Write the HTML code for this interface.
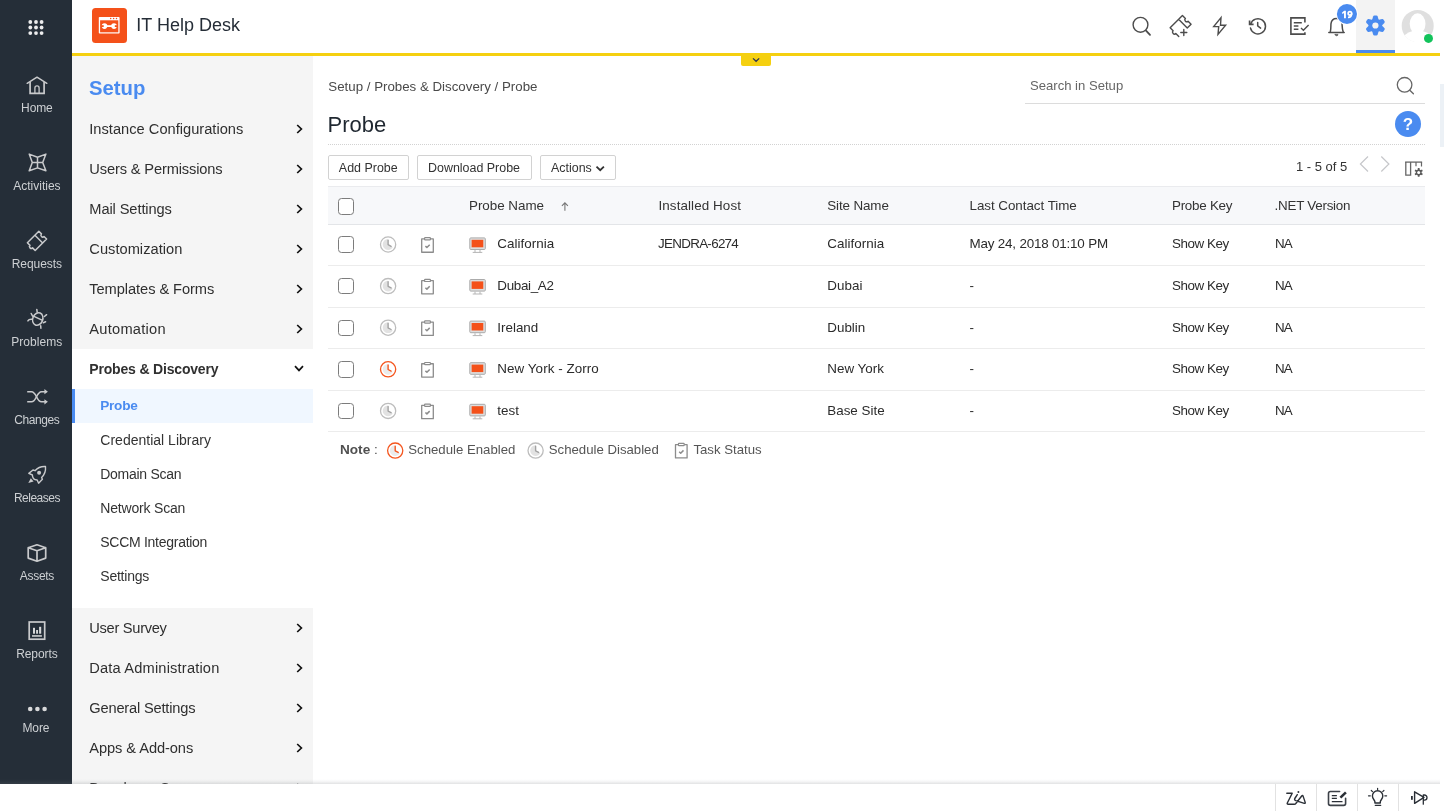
<!DOCTYPE html>
<html>
<head>
<meta charset="utf-8">
<title>Probe</title>
<style>
*{box-sizing:border-box;margin:0;padding:0}
html,body{width:1444px;height:811px;overflow:hidden;background:#fff}
body{font-family:"Liberation Sans",sans-serif;color:#333;position:relative;font-size:13.4px}
#wrap{position:absolute;left:0;top:0;width:1444px;height:811px;will-change:transform}
.abs{position:absolute}
.t{position:absolute;white-space:nowrap;line-height:1}
#rail{position:absolute;left:0;top:0;width:72px;height:784px;background:#252e38}
.rl{position:absolute;left:0.9px;width:72px;text-align:center;color:#cdd0d3;font-size:12px;line-height:14px;white-space:nowrap}
.ri{position:absolute;overflow:visible}
#hdr{position:absolute;left:72px;top:0;width:1368px;height:53px;background:#fff}
#yl{position:absolute;left:72px;top:53px;width:1368px;height:3px;background:#f5d010}
#ytab{position:absolute;left:741px;top:55px;width:30px;height:11px;background:#f5d010;border-radius:0 0 2px 2px}
#side{position:absolute;left:72px;top:56px;width:241px;height:728px;background:#f5f5f5;overflow:hidden}
#sub{position:absolute;left:0;top:293px;width:241px;height:259px;background:#fff}
.mi{position:absolute;left:17.3px;font-size:14.65px;color:#2f2f2f;white-space:nowrap;line-height:18px}
.si{position:absolute;left:28.3px;font-size:14px;color:#333;white-space:nowrap;line-height:18px}
.chev{position:absolute;left:223.5px;width:7px;height:10px}
.btn{position:absolute;top:155px;height:25px;border:1px solid #d2d2d2;border-radius:2px;background:#fff;font-size:12.45px;color:#333;text-align:center;line-height:25.4px;white-space:nowrap}
#thead{position:absolute;left:328px;top:186px;width:1097px;height:38.5px;background:#f7f8fa;border-bottom:1px solid #e3e5e8;border-top:1px solid #eaebee}
.th{position:absolute;top:197.9px;font-size:13.4px;color:#333;white-space:nowrap;line-height:16px}
.td{position:absolute;font-size:13.4px;color:#2b2b2b;white-space:nowrap;line-height:16px}
.sep{position:absolute;left:328px;width:1097px;height:1px;background:#ececec}
.cb{position:absolute;left:338px;width:16px;height:16.4px;border:1.4px solid #7c7c7c;border-radius:3.5px;background:#fff}
#bot{position:absolute;left:0;top:784px;width:1440px;height:27px;background:#fff}
#bsh{position:absolute;left:0;top:779px;width:1440px;height:5px;background:linear-gradient(to bottom,rgba(120,130,140,0) 0%,rgba(120,130,140,0.05) 40%,rgba(110,115,120,0.2) 100%)}
.bsep{position:absolute;top:784px;width:1px;height:27px;background:#e2e2e2}
</style>
</head>
<body>
<div id="wrap">
<div id="rail">
<svg class="abs" style="left:0;top:0" width="72" height="784" viewBox="0 0 72 784" fill="none" stroke="#c9cacc" stroke-linecap="round" stroke-linejoin="round">
<g fill="#ededee" stroke="none"><circle cx="30.3" cy="22" r="1.9"/><circle cx="36" cy="22" r="1.9"/><circle cx="41.6" cy="22" r="1.9"/><circle cx="30.3" cy="27.5" r="1.9"/><circle cx="36" cy="27.5" r="1.9"/><circle cx="41.6" cy="27.5" r="1.9"/><circle cx="30.3" cy="33.05" r="1.9"/><circle cx="36" cy="33.05" r="1.9"/><circle cx="41.6" cy="33.05" r="1.9"/></g>
<!-- home -->
<path d="M27.2 83.3 L37 77.2 L46.8 83.3" stroke-width="1.5"/><path d="M30.1 82 V93.3 H44.1 V82" stroke-width="1.7" stroke-linejoin="miter" stroke-linecap="butt"/><path d="M34.9 93.3 V88 a2.1 2.1 0 0 1 4.2 0 V93.3" stroke-width="1.3"/>
<!-- activities -->
<path d="M29.2 154.1 L37.5 157.2 L45.9 154.1 L42.7 162.45 L45.9 170.8 L37.5 167.9 L29.2 170.8 L32.3 162.45 Z M37.5 157.2 V167.9 M32.3 162.45 H42.7" stroke-width="1.5"/>
<!-- requests ticket -->
<g transform="translate(37 240.9) rotate(-45)" stroke-width="1.5"><path d="M-8.1 5.5 V1.8 a1.8 1.8 0 0 1 0 -3.6 V-5.5 H8.1 V-1.8 a1.8 1.8 0 0 0 0 3.6 V5.5 Z M2.55 -5.5 V5.5"/></g>
<!-- problems bug -->
<g stroke-width="1.5"><ellipse cx="37.75" cy="319" rx="5" ry="6.4" transform="rotate(22 37.75 319)"/><path d="M34 316.3 L42 320.2"/><path d="M36.8 309.4 L37.2 312.2 M31.2 313.5 L32.6 316.2 M27.9 320.9 C28.6 319.6 30 319.2 31.7 319.3 M46.6 314.7 L44.4 316.5 M45.6 321.8 L43.3 322.7 M40.9 328.3 L40.7 325.7"/></g>
<!-- changes -->
<g stroke-width="1.6" stroke-linecap="butt"><path d="M27.2 391.7 H31.5 C36.6 391.7 36.4 401.8 41.5 401.8 H45"/><path d="M27.2 401.8 H31.5 C36.6 401.8 36.4 391.7 41.5 391.7 H45"/></g>
<path d="M47.9 391.7 L44.4 389.1 V394.3 Z M47.9 401.8 L44.4 399.2 V404.4 Z" fill="#c9cacc" stroke="none"/>
<!-- releases rocket -->
<path d="M45.5 466.5 C41 466.2 37.4 468 35 470.7 L33 470 L28.8 473.4 L32.4 475 C32.4 478 34.4 479.9 37.2 480 L38.6 483.2 L42.4 479.3 L41.6 477.5 C44.2 475 45.9 471 45.5 466.5 Z" stroke-width="1.4"/>
<circle cx="39.1" cy="472.7" r="2" fill="#c9cacc" stroke="none"/><path d="M28.3 482.9 L30.8 478.3 L33.6 481.4 Z" fill="#c9cacc" stroke="none"/>
<!-- assets cube -->
<path d="M37 544.8 L45.7 547.7 V558.1 L37 561.2 L28.2 558.1 V547.7 Z M28.2 547.7 L37 550.8 L45.7 547.7 M37 550.8 V561.2" stroke-width="1.7"/>
<!-- reports -->
<rect x="29.2" y="622" width="15.5" height="17.2" stroke-width="1.7" stroke-linejoin="miter"/>
<g fill="#d6d7d8" stroke="none"><rect x="33" y="627.8" width="2" height="5.9"/><rect x="36.1" y="630" width="1.9" height="3.7"/><rect x="39.1" y="626.8" width="2.1" height="6.9"/><rect x="32" y="635.2" width="9.9" height="1.5"/></g>
<!-- more -->
<g fill="#d9dadb" stroke="none"><circle cx="30.2" cy="709" r="2.3"/><circle cx="37.4" cy="709" r="2.3"/><circle cx="44.6" cy="709" r="2.3"/></g>
</svg>
<div class="rl" style="top:101px;letter-spacing:-0.1px;margin-left:0px">Home</div>
<div class="rl" style="top:179px;letter-spacing:0px;margin-left:0px">Activities</div>
<div class="rl" style="top:257px;letter-spacing:-0.05px;margin-left:0px">Requests</div>
<div class="rl" style="top:335px;letter-spacing:0.05px;margin-left:-0.2px">Problems</div>
<div class="rl" style="top:413px;letter-spacing:-0.42px;margin-left:0px">Changes</div>
<div class="rl" style="top:491px;letter-spacing:-0.5px;margin-left:0px">Releases</div>
<div class="rl" style="top:569px;letter-spacing:-0.3px;margin-left:0px">Assets</div>
<div class="rl" style="top:647px;letter-spacing:-0.1px;margin-left:0px">Reports</div>
<div class="rl" style="top:721px;letter-spacing:-0.1px;margin-left:-1px">More</div>
</div>
<div id="hdr">
<div class="abs" style="left:20px;top:7.9px;width:35px;height:35px;background:#f4511a;border-radius:3.5px"></div>
<div class="t" style="left:64.3px;top:15px;font-size:18px;color:#252d37;line-height:20px">IT Help Desk</div>
<div class="abs" style="left:1284.3px;top:0;width:38.6px;height:50px;background:#f3f3f3"></div>
<div class="abs" style="left:1284.3px;top:50px;width:38.6px;height:3px;background:#4a8bf0"></div>
<svg class="abs" style="left:0;top:0" width="1368" height="53" viewBox="72 0 1368 53" fill="none">
<!-- logo window -->
<rect x="98.8" y="17" width="20.8" height="16.6" rx="0.8" fill="#fff"/>
<rect x="100.1" y="20.3" width="18.2" height="12" fill="#f4511a"/>
<circle cx="110.7" cy="18.6" r="0.75" fill="#f4511a"/><circle cx="113.6" cy="18.6" r="0.75" fill="#f4511a"/><circle cx="116.5" cy="18.6" r="0.75" fill="#f4511a"/>
<rect x="105.5" y="25.2" width="7.6" height="1.8" fill="#fff"/>
<circle cx="104.5" cy="26.1" r="2.8" fill="#fff"/><rect x="101" y="25.2" width="2.7" height="1.8" fill="#f4511a"/>
<circle cx="114" cy="26.1" r="2.8" fill="#fff"/><rect x="114.8" y="25.2" width="2.7" height="1.8" fill="#f4511a"/>
<!-- search -->
<g stroke="#4c4c4c" stroke-linecap="round"><circle cx="1140.5" cy="24.8" r="7.4" stroke-width="1.4"/><path d="M1146 30.6 L1150 34.8" stroke-width="1.8"/></g>
<!-- ticket plus : local rect 17.4 x 12.2 rotated -45 about (1180.6,26) -->
<g stroke="#4c4c4c" stroke-width="1.4" stroke-linejoin="round" stroke-linecap="round">
<g transform="translate(1180.6 26) rotate(-45)"><path d="M-8.7 6.1 V1.9 a1.9 1.9 0 0 1 0 -3.8 V-6.1 H8.7 V-1.9 a1.9 1.9 0 0 0 0 3.8 V6.1 H3.3 V-6.1"/></g>
<path d="M1180.8 32.5 H1186.8 M1183.8 29.5 V35.5"/></g>
<!-- lightning -->
<path d="M1221 17.6 L1213.7 26.6 H1218.7 L1218 34.4 L1225.6 25.3 H1220.5 Z" stroke="#4c4c4c" stroke-width="1.4" stroke-linejoin="miter"/>
<!-- history -->
<g stroke="#4c4c4c" stroke-width="1.5" stroke-linecap="round" stroke-linejoin="round"><path d="M1250.6 24.2 A7.6 7.6 0 1 1 1250.5 28.1"/><path d="M1249.6 20.4 V24.4 H1253.6" stroke-linecap="butt" stroke-linejoin="miter" stroke-width="1.7"/><path d="M1257.7 22.4 V25.9 L1260.6 28.1"/></g>
<!-- tasks -->
<g stroke="#4c4c4c" stroke-width="1.6" stroke-linejoin="miter"><path d="M1304.9 22.6 V17.9 H1290.9 V34.1 H1304.9 V32.2"/><path d="M1293.8 22.7 H1301.8 M1293.8 26 H1298.4 M1293.8 29.3 H1298.4" stroke-width="1.5"/><path d="M1301 28 L1303.4 30.2 L1308.6 25" stroke-width="1.4"/></g>
<!-- bell -->
<g stroke="#4c4c4c" stroke-width="1.5" stroke-linecap="round" stroke-linejoin="round"><path d="M1328.8 32.4 H1344.2"/><path d="M1330.3 32.2 C1331.2 28 1330.7 25.4 1331 23.6 C1331.5 19.8 1334 18.4 1336.5 18.4 C1339 18.4 1341.5 19.8 1342 23.6 C1342.3 25.4 1341.8 28 1343.3 32.2"/><path d="M1335.2 34.4 h2.8 a1.4 1.4 0 0 1 -2.8 0 Z" fill="#4c4c4c" stroke-width="0.6"/></g>
<circle cx="1346.95" cy="14" r="10.9" fill="#fff"/><circle cx="1346.95" cy="14" r="10.05" fill="#4a8bf0"/>
<path d="M1344.1 10.8 H1345.9 V18.3 H1344 V13.1 L1342.5 14.1 L1341.9 12.7 Z" fill="#fff"/><circle cx="1349.9" cy="13.3" r="1.75" stroke="#fff" stroke-width="1.7"/><path d="M1351.7 13.4 C1351.8 16 1350.6 17.5 1348 17.45" stroke="#fff" stroke-width="1.7"/>
<!-- gear -->
<g transform="translate(1375.4 25.5)"><g fill="#4a8bf0"><circle r="6.7"/><path d="M-3.4 -5 L-2.3 -9 Q-2 -10 -1 -10 H1 Q2 -10 2.3 -9 L3.4 -5 Z"/><path d="M-3.4 -5 L-2.3 -9 Q-2 -10 -1 -10 H1 Q2 -10 2.3 -9 L3.4 -5 Z" transform="rotate(60)"/><path d="M-3.4 -5 L-2.3 -9 Q-2 -10 -1 -10 H1 Q2 -10 2.3 -9 L3.4 -5 Z" transform="rotate(120)"/><path d="M-3.4 -5 L-2.3 -9 Q-2 -10 -1 -10 H1 Q2 -10 2.3 -9 L3.4 -5 Z" transform="rotate(180)"/><path d="M-3.4 -5 L-2.3 -9 Q-2 -10 -1 -10 H1 Q2 -10 2.3 -9 L3.4 -5 Z" transform="rotate(240)"/><path d="M-3.4 -5 L-2.3 -9 Q-2 -10 -1 -10 H1 Q2 -10 2.3 -9 L3.4 -5 Z" transform="rotate(300)"/></g><circle r="3.1" fill="#f3f3f3"/></g>
<!-- avatar -->
<defs><clipPath id="avc"><circle cx="1417.7" cy="25.9" r="16"/></clipPath></defs>
<circle cx="1417.7" cy="25.9" r="16" fill="#dfdfdf"/>
<g clip-path="url(#avc)" fill="#fff"><ellipse cx="1417.6" cy="23.8" rx="7.9" ry="10.5"/><ellipse cx="1417.6" cy="43" rx="16.5" ry="12.5"/><rect x="1400" y="36.4" width="36" height="8"/></g>
<circle cx="1428.5" cy="38.4" r="4.5" fill="#12c35b"/>
</svg>
</div>
<div id="yl"></div>
<div id="ytab"></div>
<svg class="abs" style="left:750px;top:56px" width="12" height="8" viewBox="750 56 12 8" fill="none" stroke="#2b3350" stroke-width="1.3"><path d="M753 58.4 L756.1 61.3 L759.2 58.4"/></svg>
<div id="side">
<div class="t" style="left:17px;top:20px;font-size:20.3px;font-weight:700;color:#4a8bf0;line-height:24px">Setup</div>
<div id="sub"></div>
<div class="abs" style="left:0;top:333px;width:241px;height:34px;background:#f0f7ff"></div>
<div class="abs" style="left:0;top:333px;width:3px;height:34px;background:#4a8bf0"></div>
<div class="mi" style="top:64px;letter-spacing:0.01px">Instance Configurations</div>
<svg class="chev" style="top:68px" viewBox="0 0 7 10" fill="none" stroke="#111" stroke-width="1.7"><path d="M1.2 1 L5.4 5 L1.2 9"/></svg>
<div class="mi" style="top:104px;letter-spacing:-0.14px">Users &amp; Permissions</div>
<svg class="chev" style="top:108px" viewBox="0 0 7 10" fill="none" stroke="#111" stroke-width="1.7"><path d="M1.2 1 L5.4 5 L1.2 9"/></svg>
<div class="mi" style="top:144px;letter-spacing:-0.1px">Mail Settings</div>
<svg class="chev" style="top:148px" viewBox="0 0 7 10" fill="none" stroke="#111" stroke-width="1.7"><path d="M1.2 1 L5.4 5 L1.2 9"/></svg>
<div class="mi" style="top:184px;letter-spacing:0.02px">Customization</div>
<svg class="chev" style="top:188px" viewBox="0 0 7 10" fill="none" stroke="#111" stroke-width="1.7"><path d="M1.2 1 L5.4 5 L1.2 9"/></svg>
<div class="mi" style="top:224px;letter-spacing:-0.07px">Templates &amp; Forms</div>
<svg class="chev" style="top:228px" viewBox="0 0 7 10" fill="none" stroke="#111" stroke-width="1.7"><path d="M1.2 1 L5.4 5 L1.2 9"/></svg>
<div class="mi" style="top:264px;letter-spacing:0.25px">Automation</div>
<svg class="chev" style="top:268px" viewBox="0 0 7 10" fill="none" stroke="#111" stroke-width="1.7"><path d="M1.2 1 L5.4 5 L1.2 9"/></svg>
<div class="mi" style="top:304px;font-weight:700;font-size:14px;letter-spacing:-0.18px;color:#303030">Probes &amp; Discovery</div>
<svg class="abs" style="left:221.5px;top:309px" width="10" height="7" viewBox="0 0 10 7" fill="none" stroke="#111" stroke-width="1.7"><path d="M1 1.2 L5 5.4 L9 1.2"/></svg>
<div class="si" style="top:341px;color:#4a8bf0;font-weight:700;font-size:13.6px;letter-spacing:-0.27px">Probe</div>
<div class="si" style="top:375px;letter-spacing:0.01px">Credential Library</div>
<div class="si" style="top:409px;letter-spacing:-0.29px">Domain Scan</div>
<div class="si" style="top:443px;letter-spacing:-0.19px">Network Scan</div>
<div class="si" style="top:477px;letter-spacing:-0.28px">SCCM Integration</div>
<div class="si" style="top:511px;letter-spacing:-0.23px">Settings</div>
<div class="mi" style="top:563px;letter-spacing:-0.29px">User Survey</div>
<svg class="chev" style="top:567px" viewBox="0 0 7 10" fill="none" stroke="#111" stroke-width="1.7"><path d="M1.2 1 L5.4 5 L1.2 9"/></svg>
<div class="mi" style="top:603px;letter-spacing:0.17px">Data Administration</div>
<svg class="chev" style="top:607px" viewBox="0 0 7 10" fill="none" stroke="#111" stroke-width="1.7"><path d="M1.2 1 L5.4 5 L1.2 9"/></svg>
<div class="mi" style="top:643px;letter-spacing:-0.19px">General Settings</div>
<svg class="chev" style="top:647px" viewBox="0 0 7 10" fill="none" stroke="#111" stroke-width="1.7"><path d="M1.2 1 L5.4 5 L1.2 9"/></svg>
<div class="mi" style="top:683px;letter-spacing:-0.08px">Apps &amp; Add-ons</div>
<svg class="chev" style="top:687px" viewBox="0 0 7 10" fill="none" stroke="#111" stroke-width="1.7"><path d="M1.2 1 L5.4 5 L1.2 9"/></svg>
<div class="mi" style="top:723px;letter-spacing:0px">Developer Space</div>
<svg class="chev" style="top:727px" viewBox="0 0 7 10" fill="none" stroke="#111" stroke-width="1.7"><path d="M1.2 1 L5.4 5 L1.2 9"/></svg>
</div>
<div class="t" style="left:328.3px;top:78.5px;font-size:13.3px;color:#4a4a4a;line-height:16px">Setup / Probes &amp; Discovery / Probe</div>
<div class="t" style="left:327.5px;top:111px;font-size:22px;color:#1f2730;line-height:28px">Probe</div>
<div class="t" style="left:1030px;top:78px;font-size:13.1px;color:#666;line-height:16px">Search in Setup</div>
<div class="abs" style="left:1025px;top:103px;width:400px;height:1px;background:#dcdcdc"></div>
<svg class="abs" style="left:1395px;top:75px" width="22" height="22" viewBox="0 0 22 22" fill="none" stroke="#666" stroke-width="1.3" stroke-linecap="round"><circle cx="9.6" cy="9.8" r="7.3"/><path d="M14.8 15.2 L18.4 18.8"/></svg>
<div class="abs" style="left:1395px;top:111px;width:26px;height:26px;border-radius:13px;background:#4a8bf0;color:#fff;font-size:17px;font-weight:700;text-align:center;line-height:28.2px">?</div>
<div class="abs" style="left:328px;top:144px;width:1097px;height:0;border-top:1px dotted #d2d2d2"></div>
<div class="btn" style="left:328px;width:80.5px">Add Probe</div>
<div class="btn" style="left:416.5px;width:115px">Download Probe</div>
<div class="btn" style="left:539.5px;width:76px;text-align:left;padding-left:10.5px">Actions</div>
<svg class="abs" style="left:595px;top:165px" width="10" height="8" viewBox="0 0 10 8" fill="none" stroke="#333" stroke-width="1.8"><path d="M1.5 1.6 L5.2 5.2 L8.9 1.6"/></svg>
<div class="t" style="left:1296px;top:159px;font-size:13px;color:#333;line-height:16px">1 - 5 of 5</div>
<svg class="abs" style="left:1350px;top:150px" width="80" height="36" viewBox="1350 150 80 36" fill="none"><path d="M1368 156.5 L1360.4 164 L1368 171.5 M1381.3 156.5 L1388.9 164 L1381.3 171.5" stroke="#c6c7ca" stroke-width="1.2"/><g stroke="#666" stroke-width="1.3"><path d="M1405.1 162.1 H1422.1"/><path d="M1405.8 162.1 V175.1 H1410.6 V162.1"/><path d="M1416 162.1 V166.3 M1421.5 162.1 V166.6" stroke-width="1.2"/></g><g transform="translate(1418.7 172.4)" fill="#5a5a5a"><circle r="2.9"/><rect x="-0.95" y="-4.3" width="1.9" height="8.6" rx="0.5"/><rect x="-0.95" y="-4.3" width="1.9" height="8.6" rx="0.5" transform="rotate(60)"/><rect x="-0.95" y="-4.3" width="1.9" height="8.6" rx="0.5" transform="rotate(120)"/><circle r="1.5" fill="#fff"/></g></svg>
<div id="thead"></div>
<div class="cb" style="top:198.3px"></div>
<div class="th" style="left:469px;letter-spacing:-0.02px">Probe Name</div>
<div class="th" style="left:658.5px;letter-spacing:0.1px">Installed Host</div>
<div class="th" style="left:827.3px;letter-spacing:-0.12px">Site Name</div>
<div class="th" style="left:969.5px;letter-spacing:-0.04px">Last Contact Time</div>
<div class="th" style="left:1172px;letter-spacing:-0.26px">Probe Key</div>
<div class="th" style="left:1274.6px;letter-spacing:-0.25px">.NET Version</div>
<svg class="abs" style="left:559px;top:200px" width="12" height="13" viewBox="0 0 12 13" fill="none" stroke="#777" stroke-width="1.1"><path d="M5.9 10.8 V3.2 M2.9 5.9 L5.9 2.9 L8.9 5.9"/></svg>
<div class="cb" style="top:236.4px"></div>
<div class="td" style="left:497.3px;top:236.3px;letter-spacing:0.04px">California</div>
<div class="td" style="left:658px;top:236.3px;letter-spacing:-0.7px">JENDRA-6274</div>
<div class="td" style="left:827.3px;top:236.3px;letter-spacing:0.04px">California</div>
<div class="td" style="left:969.5px;top:236.3px;letter-spacing:-0.18px">May 24, 2018 01:10 PM</div>
<div class="td" style="left:1172px;top:236.3px;letter-spacing:-0.44px">Show Key</div>
<div class="td" style="left:1275px;top:236.3px;letter-spacing:-0.87px">NA</div>
<div class="sep" style="top:265.0px"></div>
<div class="cb" style="top:278.0px"></div>
<div class="td" style="left:497.3px;top:277.9px;letter-spacing:-0.32px">Dubai_A2</div>
<div class="td" style="left:827.3px;top:277.9px;letter-spacing:0.07px">Dubai</div>
<div class="td" style="left:969.5px;top:277.9px">-</div>
<div class="td" style="left:1172px;top:277.9px;letter-spacing:-0.44px">Show Key</div>
<div class="td" style="left:1275px;top:277.9px;letter-spacing:-0.87px">NA</div>
<div class="sep" style="top:306.6px"></div>
<div class="cb" style="top:319.6px"></div>
<div class="td" style="left:497.3px;top:319.5px">Ireland</div>
<div class="td" style="left:827.3px;top:319.5px">Dublin</div>
<div class="td" style="left:969.5px;top:319.5px">-</div>
<div class="td" style="left:1172px;top:319.5px;letter-spacing:-0.44px">Show Key</div>
<div class="td" style="left:1275px;top:319.5px;letter-spacing:-0.87px">NA</div>
<div class="sep" style="top:348.2px"></div>
<div class="cb" style="top:361.2px"></div>
<div class="td" style="left:497.3px;top:361.1px;letter-spacing:0.07px">New York - Zorro</div>
<div class="td" style="left:827.3px;top:361.1px">New York</div>
<div class="td" style="left:969.5px;top:361.1px">-</div>
<div class="td" style="left:1172px;top:361.1px;letter-spacing:-0.44px">Show Key</div>
<div class="td" style="left:1275px;top:361.1px;letter-spacing:-0.87px">NA</div>
<div class="sep" style="top:389.8px"></div>
<div class="cb" style="top:402.8px"></div>
<div class="td" style="left:497.3px;top:402.7px">test</div>
<div class="td" style="left:827.3px;top:402.7px">Base Site</div>
<div class="td" style="left:969.5px;top:402.7px">-</div>
<div class="td" style="left:1172px;top:402.7px;letter-spacing:-0.44px">Show Key</div>
<div class="td" style="left:1275px;top:402.7px;letter-spacing:-0.87px">NA</div>
<div class="sep" style="top:431.4px"></div>
<div class="t" style="left:340px;top:441.5px;font-size:13.6px;color:#505050;line-height:16px"><b>Note</b> :</div>
<div class="t" style="left:408.3px;top:441.5px;font-size:13.2px;color:#555;line-height:16px">Schedule Enabled</div>
<div class="t" style="left:548.8px;top:441.5px;font-size:13.2px;color:#555;line-height:16px">Schedule Disabled</div>
<div class="t" style="left:693.4px;top:441.5px;font-size:13.2px;color:#555;line-height:16px">Task Status</div>
<div class="abs" style="left:1439.5px;top:84px;width:4.5px;height:63px;background:#ecf1f6"></div>
<svg class="abs" style="left:320px;top:230px" width="400" height="240" viewBox="320 230 400 240" fill="none"><g transform="translate(379.10 235.50)"><circle cx="9" cy="9" r="7.6" stroke="#bdbdbd" stroke-width="1.3" fill="#fff"/><path d="M9 3.6 A5.4 5.4 0 1 0 13.7 11.7 L9 9 Z" fill="#e2e2e2"/><path d="M9 4.6 V9.2 L12 10.8" stroke="#a2a2a2" stroke-width="1.4" stroke-linecap="round" stroke-linejoin="round"/></g><g transform="translate(419.50 235.20)" stroke="#8c8c8c" stroke-width="1.3" stroke-linejoin="round"><path d="M5.1 3.75 H2.2 V17.05 H13.8 V3.75 H10.9"/><rect x="5.1" y="2.5" width="5.8" height="2.2" rx="0.6" fill="#fff" stroke-width="1.2"/><path d="M5.9 10.9 L7.4 12.3 L10.2 9.5" stroke-width="1.5"/></g><g transform="translate(469.00 237.40)"><rect x="0.8" y="0.5" width="15.5" height="11.6" rx="1" fill="#dedede" stroke="#ababab" stroke-width="1"/><rect x="2.6" y="2.4" width="11.7" height="7.5" fill="#f4511a"/><path d="M6 12.6 V15 M11 12.6 V15" stroke="#b5b5b5" stroke-width="1"/><path d="M3.7 15 H13.3" stroke="#b5b5b5" stroke-width="1"/></g><g transform="translate(379.10 277.10)"><circle cx="9" cy="9" r="7.6" stroke="#bdbdbd" stroke-width="1.3" fill="#fff"/><path d="M9 3.6 A5.4 5.4 0 1 0 13.7 11.7 L9 9 Z" fill="#e2e2e2"/><path d="M9 4.6 V9.2 L12 10.8" stroke="#a2a2a2" stroke-width="1.4" stroke-linecap="round" stroke-linejoin="round"/></g><g transform="translate(419.50 276.80)" stroke="#8c8c8c" stroke-width="1.3" stroke-linejoin="round"><path d="M5.1 3.75 H2.2 V17.05 H13.8 V3.75 H10.9"/><rect x="5.1" y="2.5" width="5.8" height="2.2" rx="0.6" fill="#fff" stroke-width="1.2"/><path d="M5.9 10.9 L7.4 12.3 L10.2 9.5" stroke-width="1.5"/></g><g transform="translate(469.00 279.00)"><rect x="0.8" y="0.5" width="15.5" height="11.6" rx="1" fill="#dedede" stroke="#ababab" stroke-width="1"/><rect x="2.6" y="2.4" width="11.7" height="7.5" fill="#f4511a"/><path d="M6 12.6 V15 M11 12.6 V15" stroke="#b5b5b5" stroke-width="1"/><path d="M3.7 15 H13.3" stroke="#b5b5b5" stroke-width="1"/></g><g transform="translate(379.10 318.70)"><circle cx="9" cy="9" r="7.6" stroke="#bdbdbd" stroke-width="1.3" fill="#fff"/><path d="M9 3.6 A5.4 5.4 0 1 0 13.7 11.7 L9 9 Z" fill="#e2e2e2"/><path d="M9 4.6 V9.2 L12 10.8" stroke="#a2a2a2" stroke-width="1.4" stroke-linecap="round" stroke-linejoin="round"/></g><g transform="translate(419.50 318.40)" stroke="#8c8c8c" stroke-width="1.3" stroke-linejoin="round"><path d="M5.1 3.75 H2.2 V17.05 H13.8 V3.75 H10.9"/><rect x="5.1" y="2.5" width="5.8" height="2.2" rx="0.6" fill="#fff" stroke-width="1.2"/><path d="M5.9 10.9 L7.4 12.3 L10.2 9.5" stroke-width="1.5"/></g><g transform="translate(469.00 320.60)"><rect x="0.8" y="0.5" width="15.5" height="11.6" rx="1" fill="#dedede" stroke="#ababab" stroke-width="1"/><rect x="2.6" y="2.4" width="11.7" height="7.5" fill="#f4511a"/><path d="M6 12.6 V15 M11 12.6 V15" stroke="#b5b5b5" stroke-width="1"/><path d="M3.7 15 H13.3" stroke="#b5b5b5" stroke-width="1"/></g><g transform="translate(379.10 360.30)"><circle cx="9" cy="9" r="7.6" stroke="#f4561f" stroke-width="1.3" fill="#fff"/><path d="M9 3.6 A5.4 5.4 0 1 0 13.7 11.7 L9 9 Z" fill="#ebebeb"/><path d="M9 4.6 V9.2 L12 10.8" stroke="#f4561f" stroke-width="1.4" stroke-linecap="round" stroke-linejoin="round"/></g><g transform="translate(419.50 360.00)" stroke="#8c8c8c" stroke-width="1.3" stroke-linejoin="round"><path d="M5.1 3.75 H2.2 V17.05 H13.8 V3.75 H10.9"/><rect x="5.1" y="2.5" width="5.8" height="2.2" rx="0.6" fill="#fff" stroke-width="1.2"/><path d="M5.9 10.9 L7.4 12.3 L10.2 9.5" stroke-width="1.5"/></g><g transform="translate(469.00 362.20)"><rect x="0.8" y="0.5" width="15.5" height="11.6" rx="1" fill="#dedede" stroke="#ababab" stroke-width="1"/><rect x="2.6" y="2.4" width="11.7" height="7.5" fill="#f4511a"/><path d="M6 12.6 V15 M11 12.6 V15" stroke="#b5b5b5" stroke-width="1"/><path d="M3.7 15 H13.3" stroke="#b5b5b5" stroke-width="1"/></g><g transform="translate(379.10 401.90)"><circle cx="9" cy="9" r="7.6" stroke="#bdbdbd" stroke-width="1.3" fill="#fff"/><path d="M9 3.6 A5.4 5.4 0 1 0 13.7 11.7 L9 9 Z" fill="#e2e2e2"/><path d="M9 4.6 V9.2 L12 10.8" stroke="#a2a2a2" stroke-width="1.4" stroke-linecap="round" stroke-linejoin="round"/></g><g transform="translate(419.50 401.60)" stroke="#8c8c8c" stroke-width="1.3" stroke-linejoin="round"><path d="M5.1 3.75 H2.2 V17.05 H13.8 V3.75 H10.9"/><rect x="5.1" y="2.5" width="5.8" height="2.2" rx="0.6" fill="#fff" stroke-width="1.2"/><path d="M5.9 10.9 L7.4 12.3 L10.2 9.5" stroke-width="1.5"/></g><g transform="translate(469.00 403.80)"><rect x="0.8" y="0.5" width="15.5" height="11.6" rx="1" fill="#dedede" stroke="#ababab" stroke-width="1"/><rect x="2.6" y="2.4" width="11.7" height="7.5" fill="#f4511a"/><path d="M6 12.6 V15 M11 12.6 V15" stroke="#b5b5b5" stroke-width="1"/><path d="M3.7 15 H13.3" stroke="#b5b5b5" stroke-width="1"/></g><g transform="translate(386.20 441.60)"><circle cx="9" cy="9" r="7.6" stroke="#f4561f" stroke-width="1.3" fill="#fff"/><path d="M9 3.6 A5.4 5.4 0 1 0 13.7 11.7 L9 9 Z" fill="#ebebeb"/><path d="M9 4.6 V9.2 L12 10.8" stroke="#f4561f" stroke-width="1.4" stroke-linecap="round" stroke-linejoin="round"/></g><g transform="translate(526.60 441.60)"><circle cx="9" cy="9" r="7.6" stroke="#bdbdbd" stroke-width="1.3" fill="#fff"/><path d="M9 3.6 A5.4 5.4 0 1 0 13.7 11.7 L9 9 Z" fill="#e2e2e2"/><path d="M9 4.6 V9.2 L12 10.8" stroke="#a2a2a2" stroke-width="1.4" stroke-linecap="round" stroke-linejoin="round"/></g><g transform="translate(673.30 440.90)" stroke="#8c8c8c" stroke-width="1.3" stroke-linejoin="round"><path d="M5.1 3.75 H2.2 V17.05 H13.8 V3.75 H10.9"/><rect x="5.1" y="2.5" width="5.8" height="2.2" rx="0.6" fill="#fff" stroke-width="1.2"/><path d="M5.9 10.9 L7.4 12.3 L10.2 9.5" stroke-width="1.5"/></g></svg>

<div id="bsh"></div><div id="bot"></div>
<div class="bsep" style="left:1275.2px"></div><div class="bsep" style="left:1316px"></div><div class="bsep" style="left:1357px"></div><div class="bsep" style="left:1398.2px"></div>
<svg class="abs" style="left:1270px;top:776px" width="174" height="35" viewBox="1270 776 174 35" fill="none" stroke="#2a2f36" stroke-width="1.4" stroke-linecap="round" stroke-linejoin="round">
<!-- zia -->
<path d="M1286.8 793.2 H1292.2 L1287.3 803 Q1286.8 804.3 1288.2 804.3 H1294.2 Q1295.3 804.3 1296 803.3 L1301.9 795.7 Q1302.6 794.9 1303 795.9 L1305.2 802.4 Q1305.5 803.6 1304.3 803.3 L1295.8 800.7 Q1294 800 1294.8 798.5 L1297.3 794.7"/>
<circle cx="1298.4" cy="792" r="0.95" fill="#2a2f36" stroke="none"/>
<!-- edit note -->
<path d="M1339.6 791.5 H1330.4 Q1328.5 791.5 1328.5 793.4 V803.5 Q1328.5 805.4 1330.4 805.4 H1343.7 Q1345.6 805.4 1345.6 803.5 V798.3" stroke-width="1.6" stroke="#3c4148"/>
<path d="M1331.8 795.6 H1336.9 M1331.8 798.4 H1336.9 M1331.8 801.6 H1342.5" stroke-width="1.2" stroke-linecap="butt"/>
<path d="M1340.4 797.6 L1345.9 792.4" stroke-width="2.6" stroke-linecap="butt"/>
<!-- bulb -->
<path d="M1374.9 803 V801.6 C1374.6 800 1372.4 798.8 1372.4 796 A5.2 5.2 0 0 1 1382.8 796 C1382.8 798.8 1380.6 800 1380.3 801.6 V803 Z" stroke-width="1.4"/>
<path d="M1375.3 805.3 H1380.7" stroke-width="1.3"/>
<path d="M1377.6 788.3 V789.6 M1371.3 790.5 L1372.5 791.6 M1383.9 790.5 L1382.7 791.6 M1368.5 795.8 H1370.3 M1384.8 795.8 H1386.6" stroke-width="1.2"/>
<!-- megaphone -->
<path d="M1414.6 791.8 L1424 797.3 L1414.6 803.3 Z" stroke-width="1.4"/>
<path d="M1423.3 795 V804.2 M1423.3 795 H1424.4 a2.6 2.6 0 0 1 0 5.2 H1423.3" stroke-width="1.3"/>
<rect x="1411" y="796" width="1.8" height="3.8" fill="#2a2f36" stroke="none"/>
</svg>

</div>
</body>
</html>
